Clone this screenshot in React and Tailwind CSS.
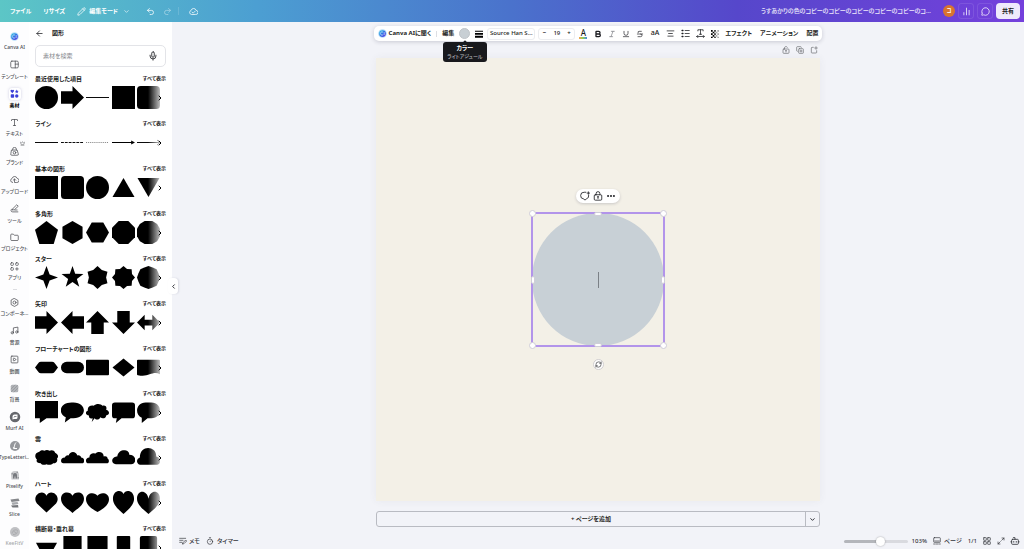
import React, { useState } from "react";
import {
  AlignCenter,
  ArrowLeft,
  Bold,
  Bot,
  ChartNoAxesColumn,
  ChevronDown,
  ChevronLeft,
  ChevronRight,
  CopyPlus,
  Crown,
  Ellipsis,
  Folder,
  Italic,
  Maximize2,
  MessageCircle,
  Mic,
  Music,
  Pencil,
  Redo2,
  RefreshCw,
  SquarePlay,
  Strikethrough,
  Timer,
  Type,
  Underline,
  Undo2,
} from "lucide-react";

const CanvaAiIcon = ({ className }) => (
  <svg viewBox="0 0 24 24" className={className}>
    <defs>
      <linearGradient id="ai" x1="0" y1="0" x2="1" y2="1">
        <stop offset="0" stopColor="#35cfe0" />
        <stop offset="0.5" stopColor="#2f74e6" />
        <stop offset="1" stopColor="#6a35e0" />
      </linearGradient>
    </defs>
    <circle cx="12" cy="12" r="11.5" fill="#b4dcf8" />
    <circle cx="12" cy="12" r="9" fill="url(#ai)" />
    <path d="M13.500 8.500a4.400 4.400 0 1 0 .3 6.800" fill="none" stroke="#fff" strokeWidth="1.500" />
    <path d="M16.500 8v8" stroke="#fff" strokeWidth="1.400" />
  </svg>
);

const LineIcon = ({ className, children }) => (
  <svg
    viewBox="0 0 24 24"
    className={className}
    fill="none"
    stroke="currentColor"
    strokeWidth="2"
    strokeLinecap="round"
    strokeLinejoin="round"
  >
    {children}
  </svg>
);

const TemplateIcon = ({ className }) => (
  <LineIcon className={className}>
    <rect x="2" y="3" width="20" height="18" rx="3" />
    <path d="M14 3v18M14 11h8" />
  </LineIcon>
);

const ElementsIcon = () => (
  <svg viewBox="0 0 24 24" className="size-[9px]" fill="#3b3fd8">
    <path d="M6 11 1.500 6a2.600 2.600 0 0 1 4.500-2.600a2.600 2.600 0 0 1 4.500 2.600z" />
    <path d="m18 1 1.500 3.500 3.500.5-2.500 2.500.5 3.500-3-1.500-3 1.500.5-3.500L13 5l3.500-.5z" />
    <rect x="2" y="14" width="9" height="9" rx="2" />
    <circle cx="18" cy="18.500" r="4.500" />
  </svg>
);

const BrandIcon = ({ className }) => (
  <LineIcon className={className}>
    <path d="M7 8V6a5 5 0 0 1 10 0v2" />
    <path d="M5 8h14l3 10a3 3 0 0 1-3 4H5a3 3 0 0 1-3-4z" />
    <circle cx="12" cy="15" r="3.500" />
  </LineIcon>
);

const UploadIcon = ({ className }) => (
  <LineIcon className={className}>
    <path d="M7 20a5.500 5.500 0 0 1-1.500-10.700A7 7 0 0 1 19 9a5.500 5.500 0 0 1-1 11h-6V11" />
    <path d="m8.500 14 3.500-3.500 3.500 3.500" />
  </LineIcon>
);

const SavedIcon = ({ className }) => (
  <LineIcon className={className}>
    <path d="M6.500 20a5.500 5.500 0 0 1-1-10.700A7 7 0 0 1 19 9a5.500 5.500 0 0 1-1 11z" />
    <path d="m8 13.500 3 3 5.500-5.500" />
  </LineIcon>
);

const ToolsIcon = ({ className }) => (
  <LineIcon className={className}>
    <path d="M8 12 18 2l4 4-10 9-5 1z" />
    <path d="M5 13c-4 3-3 8 2 8h14M13 16h6" />
  </LineIcon>
);

const AppsIcon = ({ className }) => (
  <LineIcon className={className}>
    <rect x="2" y="2" width="7" height="7" rx="2" />
    <rect x="15" y="2" width="7" height="7" rx="2" />
    <rect x="2" y="15" width="7" height="7" rx="2" />
    <path d="M18.500 15v7M15 18.500h7" />
  </LineIcon>
);

const ComponentIcon = ({ className }) => (
  <LineIcon className={className}>
    <path d="M12 1.500 21 6.500v11l-9 5-9-5v-11z" />
    <circle cx="12" cy="12" r="4" />
  </LineIcon>
);

const LockIcon = ({ className, open }) => (
  <LineIcon className={className}>
    <rect x="3" y="9" width="18" height="13" rx="2.500" />
    <path d={open ? "M7.500 9V6a4.500 4.500 0 0 1 8.500-2" : "M7.500 9V6a4.500 4.500 0 0 1 9 0v3"} />
    <path d="M12 14v4M10.500 14h3" />
  </LineIcon>
);

const AddCommentIcon = ({ className }) => (
  <LineIcon className={className}>
    <path d="M14 3H10a8 8 0 0 0-1 16l3 3 3-3a8 8 0 0 0 6-9" />
    <path d="M20 2v6M17 5h6" />
  </LineIcon>
);

const AddPageIcon = ({ className }) => (
  <LineIcon className={className}>
    <path d="M10 4H6a2 2 0 0 0-2 2v13a2 2 0 0 0 2 2h12a2 2 0 0 0 2-2v-5" />
    <path d="M18 2v8M14 6h8" />
  </LineIcon>
);

const NotesIcon = ({ className }) => (
  <LineIcon className={className}>
    <path d="M2 4h18M2 10h10M2 16h7" />
    <path d="m12 17 8-8 3 3-8 8-4 1z" />
  </LineIcon>
);

const BackgroundIcon = ({ className }) => (
  <svg viewBox="0 0 24 24" className={className}>
    <rect x="2" y="2" width="20" height="20" rx="4" fill="#b0b2b6" />
    <path d="M2 14 14 2M3 21 21 3M10 22 22 10" stroke="#8a8c91" strokeWidth="1.500" />
  </svg>
);

const MurfIcon = () => (
  <svg viewBox="0 0 24 24" className="size-3">
    <circle cx="12" cy="12" r="10.500" fill="#66686d" />
    <path d="M7 17V11a4 4 0 0 1 4-4h6v6a3 3 0 0 1-3 3h-4z" fill="#fff" />
    <path d="m10 13 2-3 1 2 2-2" stroke="#66686d" strokeWidth="1.500" fill="none" />
  </svg>
);

const LetteringIcon = () => (
  <svg viewBox="0 0 24 24" className="size-3">
    <circle cx="12" cy="12" r="10" fill="#96989c" />
    <path d="M14 5c-3 3-3 7-4 12h6M10 17c-2 0-2-2 0-3" stroke="#fff" strokeWidth="2" fill="none" />
  </svg>
);

const PixelifyIcon = () => (
  <svg viewBox="0 0 24 24" className="size-3">
    <path d="M4 12a8 8 0 0 1 16 0v9H5z" fill="#c9cacd" />
    <path d="M8 12a4 4 0 0 1 8 0v7h-3v-4h-2v4H8z" fill="#77797e" />
    <path d="M5 8h3v3H5zM15 5h3v3h-3zM17 16h3v3h-3z" fill="#9a9ca0" />
  </svg>
);

const SliceIcon = () => (
  <svg viewBox="0 0 24 24" className="size-3">
    <path d="M3 5l16-2 2 5-16 2z" fill="#85878b" />
    <path d="M5 11l12-1 2 4-12 2z" fill="#a6a8ac" />
    <path d="M4 17l14-1 1 5H7z" fill="#74767a" />
  </svg>
);

const KaleidoIcon = () => (
  <svg viewBox="0 0 24 24" className="size-3">
    <circle cx="12" cy="12" r="10" fill="#85878c" />
    <path d="M6 15c2-8 9-9 12-5M8 17c4 1 8-2 9-6M9 10l6 5" stroke="#5c5e63" strokeWidth="2" fill="none" />
  </svg>
);

const ACTIVE_TILE = (
  <span className="flex size-3 items-center justify-center rounded-[3px] bg-white shadow-[0_0_3px_rgba(60,60,140,0.25)]">
    <ElementsIcon />
  </span>
);

const mainNav = [
  { label: "Canva AI", icon: <CanvaAiIcon className="size-[9px]" /> },
  { label: "テンプレート", icon: <TemplateIcon className="size-[9px]" /> },
  { label: "素材", icon: ACTIVE_TILE, active: true },
  { label: "テキスト", icon: <Type className="size-[9px]" /> },
  { label: "ブランド", icon: <BrandIcon className="size-[9px]" />, pro: true },
  { label: "アップロード", icon: <UploadIcon className="size-[9px]" /> },
  { label: "ツール", icon: <ToolsIcon className="size-[9px]" /> },
  { label: "プロジェクト", icon: <Folder className="size-[9px]" /> },
  { label: "アプリ", icon: <AppsIcon className="size-[9px]" /> },
];

const appNav = [
  { label: "コンポーネ...", icon: <ComponentIcon className="size-[9px]" /> },
  { label: "音源", icon: <Music className="size-[9px]" /> },
  { label: "動画", icon: <SquarePlay className="size-[9px]" /> },
  { label: "背景", icon: <BackgroundIcon className="size-[9px]" /> },
  { label: "Murf AI", icon: <MurfIcon /> },
  { label: "TypeLetteri...", icon: <LetteringIcon /> },
  { label: "Pixelify", icon: <PixelifyIcon /> },
  { label: "Slice", icon: <SliceIcon /> },
  { label: "KeeFitV", icon: <KaleidoIcon />, faded: true },
];

const Shape = ({ children }) => (
  <svg viewBox="0 0 24 24" className="size-[23px] shrink-0" fill="#000">
    {children}
  </svg>
);

// Star as an SVG point list
function star(count, inner) {
  return Array.from({ length: count * 2 }, (_, i) => {
    const r = i % 2 ? inner : 12;
    const a = ((-90 + (180 / count) * i) * Math.PI) / 180;
    return `${(12 + r * Math.cos(a)).toFixed(2)},${(12 + r * Math.sin(a)).toFixed(2)}`;
  }).join(" ");
}

const circle = <circle cx="12" cy="12" r="12" />;
const square = <rect width="24" height="24" />;
const rounded = <rect width="24" height="24" rx="4" />;
const arrowRight = <path d="M0 5.500h12V0l12 12-12 12v-5.500H0z" />;
const octagon = <path d="M7 0h10l7 7v10l-7 7H7l-7-7V7z" />;

const sections = [
  {
    title: "最近使用した項目",
    shapes: [
      circle,
      arrowRight,
      <path d="M0 12h24" stroke="#000" />,
      square,
      rounded,
    ],
  },
  {
    title: "ライン",
    shapes: [
      <path d="M0 12h24" stroke="#000" />,
      <path d="M0 12h24" stroke="#000" strokeDasharray="3 1" />,
      <path d="M0 12h24" stroke="#777" strokeDasharray="1 1" />,
      <path d="M0 11.500h20v-1.500l4 2-4 2v-1.500H0z" />,
      <path d="M0 12h24M21 9.500l3 2.500-3 2.500" stroke="#000" fill="none" />,
    ],
  },
  {
    title: "基本の図形",
    shapes: [
      square,
      rounded,
      circle,
      <path d="M12 2 23.500 22H.5z" />,
      <path d="M12 22 .5 2h23z" />,
    ],
  },
  {
    title: "多角形",
    shapes: [
      <path d="m12 0 12 9-4.500 15h-15L0 9z" />,
      <path d="m12 0 10.500 6v12L12 24 1.500 18V6z" />,
      <path d="M6 1.500h12L24 12l-6 10.500H6L0 12z" />,
      octagon,
      <path d="M8 0h8l5 3 3 5v8l-3 5-5 3H8l-5-3-3-5V8l3-5z" />,
    ],
  },
  {
    title: "スター",
    shapes: [
      <polygon points={star(4, 4.6)} />,
      <polygon points={star(5, 4.8)} />,
      <polygon points={star(6, 9)} />,
      <polygon points={star(8, 9.6)} />,
      <polygon points={star(8, 11.3)} />,
    ],
  },
  {
    title: "矢印",
    shapes: [
      arrowRight,
      <path d="M24 5.500H12V0L0 12l12 12v-5.500h12z" />,
      <path d="M5.500 24V12H0L12 0l12 12h-5.500v12z" />,
      <path d="M5.500 0v12H0l12 12 12-12h-5.500V0z" />,
      <path d="m0 12 8-8v5h8V4l8 8-8 8v-5H8v5z" />,
    ],
  },
  {
    title: "フローチャートの図形",
    shapes: [
      <path d="M6 6h12q2 0 3 2l3 4-3 4q-1 2-3 2H6q-2 0-3-2l-3-4 3-4q1-2 3-2z" />,
      <rect y="6" width="24" height="12" rx="6" />,
      <rect y="4" width="24" height="16" rx="1" />,
      <path d="m12 2.500 11.500 9.500L12 21.500.5 12z" />,
      <path d="M1 4h22q1 0 1 1v14c-8-4-12 4-23 1q-1 0-1-1V5q0-1 1-1z" />,
    ],
  },
  {
    title: "吹き出し",
    shapes: [
      <path d="M0 0h24v18H12l-7 5v-5H0z" />,
      <path d="M11 1.500h2c14.500 0 14.500 16.500 0 16.500h-3l-6 4.500 1-5.500C-4 12.500-1 1.500 11 1.500z" />,
      <path d="M8 5c3-3 8-2 9 0 4-1 5 2 4 4 4 1 4 6 0 6 0 3-4 4-6 2-1 3-5 3-6 1l-3 4 1-4c-3 1-4-1-4-3-4 0-4-4-1-5-1-4 3-6 6-5z" />,
      <path d="M3 1.500h18q3 0 3 3V15q0 3-3 3H10l-6 5 1-5H3q-3 0-3-3V4.500q0-3 3-3z" />,
      <path d="M9 1.500h6c12 0 12 16.500 0 16.500h-4l-6 5v-5.500C-3 14-1 1.500 9 1.500z" />,
    ],
  },
  {
    title: "雲",
    shapes: [
      <path d="M4.500 6c2-2 4-2 5.500-1 1-1 4-1 5 0 2-1 5-1 6 2 4 2 3.500 5 2 6 1 3-1 5-4 5-2 2-5 2-7 1-2 1-5 1-6-1-4 0-5-2-4-4-3-3-2-7 2.500-8z" />,
      <path d="M2.500 18c-3.500 0-3.500-6 1.500-6 1-2 3-3 4-2 1-5 8-5 9 0 2-1 4 1 4 2 4 0 4 6 1 6z" />,
      <path d="M2.500 18c-3.500 0-3.500-6 1-6 0-4 4-5 6-4 3-3 9-2 9 3 3-1 4 1 4 2 2 1 2 5-1 5z" />,
      <path d="M4 19c-5.500 0-5-8 1.500-8 1-9 13-8 12.500-2 8 0 8 10 2 10z" />,
      <path d="M3 19.500c-4-1-4-6 0-7.500 0-14 18-12 17-1 6 1 5 8 1 8.500z" />,
    ],
  },
  {
    title: "ハート",
    shapes: [
      <path d="M12 22.500 2 13C-4 5 8-3 12 5c4-8 16 0 10 8z" />,
      <path d="M12 23C8 19 0 15 0 8c0-8 10-8 12-3 2-5 12-5 12 3 0 7-8 11-12 15z" />,
      <path d="M12 22C7 19 0 15 0 8.500c0-7 9-8 12-3.500 3-4.500 12-3.500 12 3.500C24 15 17 19 12 22z" />,
      <path d="M12 24C8 20 1 15 1 8c0-9 9-10 11-5 2-5 11-4 11 5 0 7-7 12-11 16z" />,
      <path d="M12 24C8 20 0 15 0 8c0-9 10-10 12 0 2-10 12-9 12 0 0 7-8 12-12 16z" />,
    ],
  },
  {
    title: "横断幕・垂れ幕",
    shapes: [
      <path d="M1 7h22l-6 11H7z" />,
      <path d="M2.500 0h19v24L12 18l-9.500 6z" />,
      <path d="M1.500 0h21v24h-21z" />,
      <rect x="5" width="14" height="24" rx="1" />,
      <rect x="3" width="18" height="24" rx="2" />,
    ],
  },
];

function NavItem({ item }) {
  return (
    <button
      className={`relative flex w-full flex-1 flex-col items-center gap-0.5 ${
        item.faded ? "opacity-50" : ""
      } ${item.active ? "font-bold text-black" : "font-medium text-[#4c4e53]"}`}
    >
      <span className="flex h-3 items-center justify-center">{item.icon}</span>
      <span className="text-[5px] leading-[7px] whitespace-nowrap">{item.label}</span>
      {item.pro && <Crown className="absolute -top-1 right-1 size-[5px]" />}
    </button>
  );
}

function Header() {
  return (
    <header className="flex h-[22px] shrink-0 items-center bg-[linear-gradient(90deg,#5cc6c6_0%,#4c9fd2_25%,#4a72cc_50%,#5647cb_72%,#7440dc_100%)] pr-1 pl-2.5 text-[6px] font-bold text-white">
      <button>ファイル</button>
      <button className="ml-3">リサイズ</button>
      <button className="ml-3 flex items-center gap-[3px]">
        <Pencil className="size-[9px]" />
        編集モード
        <ChevronDown className="ml-0.5 size-[7px]" />
      </button>
      <button className="ml-4" aria-label="元に戻す">
        <Undo2 className="size-[9px]" />
      </button>
      <button className="ml-2 opacity-50" aria-label="やり直す">
        <Redo2 className="size-[9px]" />
      </button>
      <span className="mx-1.5 h-2 w-px bg-white/15" />
      <SavedIcon className="ml-1 size-[9px]" />

      <p className="ml-auto font-medium whitespace-nowrap text-white/90">
        うすあかりの色のコピーのコピーのコピーのコピーのコピーのコ...
      </p>
      <span className="ml-3 flex size-3 items-center justify-center rounded-full bg-[#d9742e] text-[5px]">
        コ
      </span>
      <button
        className="ml-[3px] flex size-4 items-center justify-center rounded-[3px] border border-white/10"
        aria-label="分析"
      >
        <ChartNoAxesColumn className="size-[9px]" />
      </button>
      <button
        className="ml-[3px] flex size-4 items-center justify-center rounded-[3px] border border-white/10"
        aria-label="コメント"
      >
        <MessageCircle className="size-[9px]" />
      </button>
      <button className="ml-[3px] h-4 w-6 rounded-[4px] bg-[#efeafc] text-[#1c1d22]">共有</button>
    </header>
  );
}

function ShapesPanel() {
  return (
    <aside className="flex w-[143px] shrink-0 flex-col overflow-hidden bg-white pr-1.5 pl-1.5">
      <div className="flex h-[22px] shrink-0 items-center gap-2">
        <button aria-label="戻る">
          <ArrowLeft className="size-[9px]" />
        </button>
        <h1 className="text-[6px] font-bold">図形</h1>
      </div>

      <label className="mt-px flex h-[22px] shrink-0 items-center rounded-[5px] border border-[#e3e4e8] px-[7px]">
        <input
          className="w-full min-w-0 text-[6px] outline-none placeholder:text-[#85878c]"
          placeholder="素材を検索"
          aria-label="素材を検索"
        />
        <Mic className="size-[10px] shrink-0" />
      </label>

      <div className="mt-[7px] flex flex-col gap-[9px]">
        {sections.map((section) => (
          <section key={section.title}>
            <div className="flex h-2.5 items-center justify-between font-bold">
              <h2 className="text-[6px]">{section.title}</h2>
              <a href="#all" className="text-[5px]">
                すべて表示
              </a>
            </div>
            <div className="relative mt-0.5 mb-px flex w-[125px] justify-between">
              {section.shapes.map((shape, i) => (
                <Shape key={i}>{shape}</Shape>
              ))}
              <div className="absolute inset-y-0 -right-1 w-4 bg-linear-to-r from-white/0 to-white" />
              <button className="absolute top-2 -right-1 text-black" aria-label="次へ">
                <ChevronRight className="size-2" strokeWidth={3} />
              </button>
            </div>
          </section>
        ))}
      </div>
    </aside>
  );
}

function Toolbar() {
  const [size, setSize] = useState(19);

  return (
    <div className="relative z-10 flex h-[15px] shrink-0 items-center rounded-[5px] bg-white pr-1 pl-1 text-[6px] font-bold shadow-[0_1px_4px_rgba(40,40,70,0.2)]">
      <div className="flex items-center gap-[5px]">
        <button className="flex items-center gap-0.5">
          <CanvaAiIcon className="size-[9px]" />
          Canva AIに聞く
        </button>
        <span className="h-1.5 w-px bg-[#dddee3]" />
        <button>編集</button>
        <div className="relative">
          <button
            className="block size-[11px] rounded-full border border-[#bfc4c8] bg-[#c8cfd4]"
            aria-label="カラー"
          />
          <div className="absolute top-[14px] left-1/2 flex h-5 w-11 -translate-x-1/2 flex-col items-center justify-center rounded-[3px] bg-[#18191d] leading-2 text-white">
            <span className="absolute -top-px size-1 rotate-45 bg-[#18191d]" />
            <span>カラー</span>
            <span className="text-[5px] font-medium whitespace-nowrap text-[#b4b5ba]">ライトアジュール</span>
          </div>
        </div>
        <button aria-label="線のスタイル">
          <svg viewBox="0 0 24 24" className="size-2">
            <path d="M0 2h24v3H0zM0 9h24v5H0zM0 17h24v6H0z" />
          </svg>
        </button>
      </div>
      <button className="ml-1 h-3 w-12 rounded-[3px] border border-[#ecedf0] font-medium whitespace-nowrap">
        Source Han S...
      </button>
      <div className="ml-[3px] flex h-3 w-[37px] items-center justify-around rounded-[3px] border border-[#ecedf0]">
        <button onClick={() => setSize(size - 1)}>−</button>
        <span className="font-medium">{size}</span>
        <button onClick={() => setSize(size + 1)}>+</button>
      </div>
      <div className="ml-1 flex w-[140px] items-center justify-between">
        <button className="flex flex-col items-center" aria-label="テキストの色">
          <span className="text-[8px] leading-[8px] font-medium">A</span>
          <span className="h-0.5 w-2 bg-linear-to-r from-[#f0a04a] via-[#8ccf4f] to-[#4a83e0]" />
        </button>
        <button aria-label="太字">
          <Bold className="size-2" strokeWidth={4} />
        </button>
        <button aria-label="斜体">
          <Italic className="size-2 text-[#77797e]" />
        </button>
        <button aria-label="下線">
          <Underline className="size-2" />
        </button>
        <button aria-label="取り消し線">
          <Strikethrough className="size-2" />
        </button>
        <button className="text-[7px] font-medium">aA</button>
        <button aria-label="配置を揃える">
          <AlignCenter className="size-[9px]" />
        </button>
        <button aria-label="リスト">
          <LineIcon className="size-[9px]">
            <path d="M11 4h11M11 12h11M11 20h11" />
            <path d="M3 4h2M3 12h2M3 20h2" strokeWidth="4" />
          </LineIcon>
        </button>
        <button aria-label="間隔">
          <LineIcon className="size-[9px]">
            <path d="M5 5V2h14v3M12 2v12M9 14h6M2 20h20M5 17l-3 3 3 3M19 17l3 3-3 3" />
          </LineIcon>
        </button>
        <button aria-label="透明度">
          <svg viewBox="0 0 24 24" className="size-2">
            <path d="M0 0h5v5H0zM5 5h5v5H5zM0 10h5v5H0zM5 15h5v5H5zM0 20h5v4H0zM10 0h4v5h-4zM10 10h4v5h-4zM10 20h4v4h-4z" />
            <path d="M14 5h5v5h-5zM14 15h5v5h-5zM19 0h5v5h-5zM19 10h5v5h-5zM19 20h5v4h-5z" fill="#aaa" />
          </svg>
        </button>
      </div>
      <div className="ml-1.5 flex gap-2">
        <button>エフェクト</button>
        <button>アニメーション</button>
        <button>配置</button>
      </div>
    </div>
  );
}

const handles = [
  "size-[7px] rounded-full -top-[3px] -left-[3px]",
  "size-[7px] rounded-full -top-[3px] -right-[3px]",
  "size-[7px] rounded-full -bottom-[3px] -left-[3px]",
  "size-[7px] rounded-full -bottom-[3px] -right-[3px]",
  "h-1 w-2 rounded-full -top-px left-1/2 -translate-x-1/2",
  "h-1 w-2 rounded-full -bottom-px left-1/2 -translate-x-1/2",
  "h-2 w-1 rounded-full -left-px top-1/2 -translate-y-1/2",
  "h-2 w-1 rounded-full -right-px top-1/2 -translate-y-1/2",
];

function Canvas() {
  return (
    <div className="grid aspect-square place-items-center bg-[#f3f0e7] shadow-[0_0_8px_rgba(60,60,90,0.06)]">
      <div className="relative grid aspect-square w-[30%] place-items-center">
        <div className="col-start-1 row-start-1 size-full rounded-full bg-[#c8d0d6]" />
        <span className="col-start-1 row-start-1 h-4 w-px bg-[#7b8086]" />
        <div className="absolute -inset-px border-2 border-[#b294ea]" />
        {handles.map((handle) => (
          <span key={handle} className={`absolute border border-[#cfcdd8] bg-white ${handle}`} />
        ))}

        {/* Quick actions */}
        <div className="absolute -top-6 flex h-3.5 items-center gap-[3px] rounded-full bg-white px-1 shadow-[0_1px_3px_rgba(40,40,70,0.2)]">
          <button aria-label="コメントを追加">
            <AddCommentIcon className="size-[10px]" />
          </button>
          <button aria-label="ロック">
            <LockIcon className="size-[10px]" />
          </button>
          <button aria-label="その他">
            <Ellipsis className="size-[10px]" strokeWidth={3} />
          </button>
        </div>
        <button
          className="absolute -bottom-6 flex size-[11px] items-center justify-center rounded-full border border-[#d0ced0] bg-white"
          aria-label="回転"
        >
          <RefreshCw className="size-[7px]" />
        </button>
      </div>
    </div>
  );
}

function Footer() {
  return (
    <footer className="flex h-4 w-full shrink-0 items-center pr-1 pl-[7px] text-[6px] font-medium text-[#33353b]">
      <button className="flex items-center gap-0.5">
        <NotesIcon className="size-2" />
        メモ
      </button>
      <button className="ml-1.5 flex items-center gap-[3px]">
        <Timer className="size-2" />
        タイマー
      </button>
      <input
        type="range"
        min="10"
        max="170"
        defaultValue="103"
        aria-label="ズーム"
        className="ml-auto h-[3px] w-16 appearance-none rounded-full bg-linear-to-r from-[#b4b6bb] from-55% to-[#d9dadf] to-55% [&::-webkit-slider-thumb]:size-[9px] [&::-webkit-slider-thumb]:appearance-none [&::-webkit-slider-thumb]:rounded-full [&::-webkit-slider-thumb]:bg-white [&::-webkit-slider-thumb]:shadow-[0_0_2px_rgba(0,0,0,0.35)]"
      />
      <span className="ml-1">103%</span>
      <button className="ml-1.5 flex items-center gap-[3px]">
        <LineIcon className="size-2">
          <rect x="2" y="2" width="20" height="14" rx="2" />
          <path d="M2 21h5M10 21h5M18 21h4M5 12h14" />
        </LineIcon>
        ページ
      </button>
      <span className="ml-1.5">1/1</span>
      <button className="ml-1.5" aria-label="グリッド">
        <LineIcon className="size-2">
          <rect x="2" y="2" width="8" height="8" rx="1" />
          <rect x="14" y="2" width="8" height="8" rx="1" />
          <rect x="2" y="14" width="8" height="8" rx="1" />
          <rect x="14" y="14" width="8" height="8" rx="1" />
        </LineIcon>
      </button>
      <button className="ml-1.5" aria-label="全画面">
        <Maximize2 className="size-2" />
      </button>
      <button className="ml-[5px]" aria-label="アシスタント">
        <Bot className="size-[10px]" />
      </button>
    </footer>
  );
}

export default function App() {
  return (
    <div
      lang="ja"
      className="flex h-screen flex-col overflow-hidden bg-[#f2f3f8] font-['Noto_Sans','Noto_Sans_CJK_JP',sans-serif] text-[#1c1d22] [font-feature-settings:'palt']"
    >
      <Header />
      <div className="flex min-h-0 flex-1">
        <nav className="flex w-[29px] shrink-0 flex-col items-center overflow-hidden bg-[#fdfdfe] pt-2">
          <div className="flex h-[259px] w-full shrink-0 flex-col">
            {mainNav.map((item) => (
              <NavItem key={item.label} item={item} />
            ))}
          </div>
          <span className="mb-1.5 h-px w-1 shrink-0 bg-[#dcdde1]" />
          <div className="flex h-[259px] w-full shrink-0 flex-col">
            {appNav.map((item) => (
              <NavItem key={item.label} item={item} />
            ))}
          </div>
        </nav>

        <ShapesPanel />

        <main className="relative flex min-w-0 flex-1 flex-col items-center pt-1">
          <button
            className="absolute top-64 -left-1 flex h-4 w-2.5 items-center justify-center rounded-[4px] bg-white shadow-[1px_0_2px_rgba(40,40,70,0.12)]"
            aria-label="パネルを閉じる"
          >
            <ChevronLeft className="size-[7px]" strokeWidth={3} />
          </button>

          <Toolbar />

          <div className="flex w-[52%] flex-col">
            <div className="flex h-[17px] items-center justify-end gap-1.5 pr-0.5 text-[#66686d]">
              <button aria-label="ページをロック">
                <LockIcon className="size-2" open />
              </button>
              <button aria-label="ページを複製">
                <CopyPlus className="size-2" />
              </button>
              <button aria-label="ページを追加">
                <AddPageIcon className="size-2" />
              </button>
            </div>
            <Canvas />
            <div className="mt-[10px] flex h-4 rounded-[3px] border border-[#b9bbc2] text-[6px] font-bold">
              <button className="flex-1">+ ページを追加</button>
              <button
                className="flex w-3.5 items-center justify-center border-l border-[#b9bbc2]"
                aria-label="ページの種類"
              >
                <ChevronDown className="size-[7px]" strokeWidth={3} />
              </button>
            </div>
          </div>

          <div className="mt-auto w-full">
            <Footer />
          </div>
        </main>
      </div>
    </div>
  );
}
